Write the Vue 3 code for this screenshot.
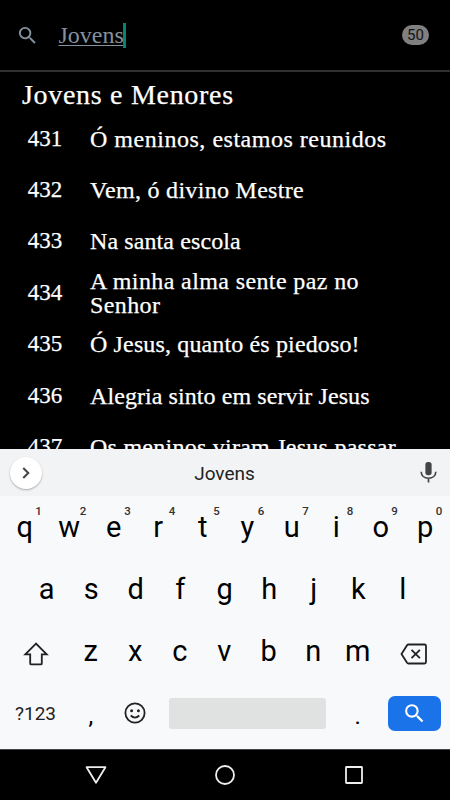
<template>
  <div class="screen">
    <header class="search-bar">
      <svg class="search-icon" viewBox="0 0 24 24">
        <path :d="searchPath" />
      </svg>
      <div class="search-input"><span class="query">Jovens</span><i class="caret"></i></div>
      <span class="count">50</span>
    </header>

    <main class="results">
      <h1 class="section-title">Jovens e Menores</h1>
      <div v-for="hymn in hymns" :key="hymn.number" class="hymn">
        <span class="hymn-number">{{ hymn.number }}</span>
        <span class="hymn-title" :style="{ letterSpacing: hymn.tracking + 'px' }">{{ hymn.title }}</span>
      </div>
    </main>

    <section class="keyboard">
      <div class="suggestions">
        <button class="expand">
          <svg viewBox="0 0 24 24"><path d="M9 6.5l5.5 5.5L9 17.5" /></svg>
        </button>
        <span class="suggestion">Jovens</span>
        <svg class="mic" viewBox="0 0 24 24">
          <rect x="9" y="2" width="6" height="12.6" rx="2.6" />
          <path d="M5 11.2c0 3.9 3 6.3 7 6.3s7-2.4 7-6.3M12 17.5v4" />
        </svg>
      </div>

      <div class="row row-top">
        <span v-for="(letter, i) in topRow" :key="letter" class="key">
          {{ letter }}<sup class="hint">{{ (i + 1) % 10 }}</sup>
        </span>
      </div>

      <div class="row row-middle">
        <span v-for="letter in middleRow" :key="letter" class="key">{{ letter }}</span>
      </div>

      <div class="row row-bottom">
        <span class="key icon-key">
          <svg class="shift" viewBox="0 0 26 26">
            <path d="M13 2.6L2.3 13.3h4.9v9.1q0 1 1 1h9.6q1 0 1-1v-9.1h4.900z" />
          </svg>
        </span>
        <span v-for="letter in bottomRow" :key="letter" class="key">{{ letter }}</span>
        <span class="key icon-key">
          <svg class="backspace" viewBox="0 0 28 22">
            <path d="M8.500 1.500h16q1.500 0 1.500 1.500v16q0 1.500-1.500 1.500h-16q-1 0-1.600-.9L1.500 11l5.400-8.600q.6-.9 1.600-.9z" />
            <path d="M11.500 6.800l8.400 8.400M19.900 6.800l-8.400 8.400" />
          </svg>
        </span>
      </div>

      <div class="row row-actions">
        <span class="key symbols">?123</span>
        <span class="key punctuation">,</span>
        <span class="key icon-key">
          <svg class="emoji" viewBox="0 0 24 24">
            <circle cx="12" cy="12" r="9.6" />
            <circle class="eye" cx="8.6" cy="9.8" r="1.5" />
            <circle class="eye" cx="15.4" cy="9.8" r="1.5" />
            <path d="M7.700 14.500q4.300 4.300 8.600 0" />
          </svg>
        </span>
        <span class="space-bar"></span>
        <span class="key punctuation">.</span>
        <button class="go">
          <svg viewBox="0 0 24 24"><path :d="searchPath" /></svg>
        </button>
      </div>
    </section>

    <nav class="nav-bar">
      <svg viewBox="0 0 24 24"><path d="M2.600 4.200h18.800L12 19.800z" /></svg>
      <svg viewBox="0 0 24 24"><circle cx="12" cy="12" r="9" /></svg>
      <svg viewBox="0 0 24 24"><rect x="4" y="4" width="16" height="16" rx="0.5" /></svg>
    </nav>
  </div>
</template>

<script setup>
const searchPath =
  'M15.500 14h-.79l-.28-.27A6.471 6.471 0 0 0 16 9.500 6.500 6.500 0 1 0 9.500 16c1.610 0 3.090-.59 4.230-1.570l.27.28v.79l5 4.990L20.490 19l-4.990-5zm-6 0C7.010 14 5 11.990 5 9.500S7.010 5 9.500 5 14 7.010 14 9.500 11.990 14 9.500 14z'

const hymns = [
  { number: 431, title: 'Ó meninos, estamos reunidos', tracking: 0.52 },
  { number: 432, title: 'Vem, ó divino Mestre', tracking: 0.3 },
  { number: 433, title: 'Na santa escola', tracking: 0.1 },
  { number: 434, title: 'A minha alma sente paz no Senhor', tracking: 0.39 },
  { number: 435, title: 'Ó Jesus, quanto és piedoso!', tracking: 0.14 },
  { number: 436, title: 'Alegria sinto em servir Jesus', tracking: 0.08 },
  { number: 437, title: 'Os meninos viram Jesus passar', tracking: 0.25 },
]

const topRow = [...'qwertyuiop']
const middleRow = [...'asdfghjkl']
const bottomRow = [...'zxcvbnm']
</script>

<style>
body {
  background: #000;
}
</style>

<style scoped>
.screen {
  display: flex;
  flex-direction: column;
  width: 450px;
  height: 800px;
  overflow: hidden;
  background: #000;
  color: #fff;
  font-family: 'Liberation Serif', serif;
}

.search-bar {
  display: flex;
  align-items: center;
  flex-shrink: 0;
  box-sizing: border-box;
  height: 72px;
  padding: 0 21px 0 16px;
  border-bottom: 2px solid #303030;
}

.search-icon {
  width: 23px;
  height: 23px;
  fill: #84919e;
}

.search-input {
  display: flex;
  align-items: center;
  flex: 1;
  height: 26px;
  padding-left: 19.5px;
  font-size: 24px;
  line-height: 25px;
  color: #84919e;
}

.query {
  text-decoration: underline;
  text-decoration-thickness: 1px;
  text-underline-offset: 2px;
  text-decoration-skip-ink: none;
}

.caret {
  width: 3px;
  height: 25px;
  margin-left: -1px;
  background: #008577;
}

.count {
  width: 27px;
  height: 20px;
  border-radius: 10px;
  background: #808080;
  color: #111;
  font: 15px/21px Roboto, sans-serif;
  text-align: center;
}

.results {
  height: 377px;
  overflow: hidden;
  -webkit-text-stroke: 0.25px #fff;
}

.section-title {
  box-sizing: border-box;
  height: 41px;
  margin: 0;
  padding: 4px 0 0 22px;
  font-size: 28px;
  font-weight: 400;
  line-height: 38px;
  letter-spacing: 0.7px;
}

.hymn {
  display: grid;
  grid-template-columns: 90px 315px;
  align-items: center;
  height: 51.4px;
  font-size: 24px;
  line-height: 24px;
}

.hymn-number {
  font-size: 23px;
  text-align: center;
}

.keyboard {
  flex-shrink: 0;
  height: 300px;
  background: #f8f9fb;
  color: #111;
  font-family: Roboto, sans-serif;
}

.suggestions {
  display: grid;
  grid-template-columns: 53px 1fr 44px;
  align-items: center;
  height: 47px;
  background: #f1f3f4;
}

.expand {
  display: flex;
  align-items: center;
  justify-content: center;
  width: 32px;
  height: 32px;
  margin-left: 10px;
  padding: 0;
  border: 0;
  border-radius: 50%;
  background: #fff;
  box-shadow: 0 1px 2px rgba(0, 0, 0, 0.3);
}

.expand svg {
  width: 22px;
  height: 22px;
  fill: none;
  stroke: #444;
  stroke-width: 2.2;
}

.suggestion {
  padding-right: 10px;
  padding-top: 2px;
  font-size: 19px;
  text-align: center;
  color: #222;
}

.mic {
  width: 25px;
  height: 25px;
  margin-left: 10px;
  fill: #444;
}

.mic path {
  fill: none;
  stroke: #444;
  stroke-width: 1.6;
}

.row {
  display: grid;
  height: 62.5px;
  padding: 0 2.5px;
}

.row-top {
  grid-template-columns: repeat(10, 44.5px);
}

.row-middle {
  grid-template-columns: repeat(9, 44.5px);
  padding: 0 24.5px;
}

.row-bottom {
  grid-template-columns: 66px repeat(7, 44.5px) 67px;
}

.row-actions {
  grid-template-columns: 66px 44.5px 44.5px 178px 44.5px 67px;
  grid-template-rows: 59px;
  align-items: center;
  height: 59px;
}

.key {
  position: relative;
  font-size: 29px;
  line-height: 61px;
  text-align: center;
  color: #000;
}

.row-top .key {
  line-height: 62px;
}

.hint {
  position: absolute;
  top: 8px;
  left: 32px;
  width: 8px;
  font-size: 11.5px;
  font-weight: 500;
  line-height: 14px;
  color: #333;
}

.icon-key {
  display: flex;
  align-items: center;
  justify-content: center;
}

.icon-key svg {
  fill: none;
  stroke: #222;
  stroke-width: 1.8;
}

.row-bottom .icon-key {
  padding-top: 3px;
}

.shift {
  width: 26px;
  height: 26px;
}

.backspace {
  width: 28px;
  height: 22px;
}

.emoji {
  width: 24px;
  height: 24px;
}

.icon-key .eye {
  fill: #222;
  stroke: none;
}

.row-actions .key {
  line-height: 50px;
}

.row-actions .symbols {
  padding-top: 1px;
  font-size: 19px;
  color: #222;
}

.row-actions .punctuation {
  padding-top: 6px;
  font-size: 24px;
}

.space-bar {
  height: 31px;
  margin: 0 10px 0 11px;
  border-radius: 3px;
  background: #e0e2e1;
}

.go {
  display: flex;
  align-items: center;
  justify-content: center;
  width: 53px;
  height: 35px;
  margin-left: 7.5px;
  padding: 0;
  border: 0;
  border-radius: 7px;
  background: #1a73e8;
}

.go svg {
  width: 25px;
  height: 25px;
  fill: #fff;
}

.nav-bar {
  display: flex;
  align-items: center;
  justify-content: space-between;
  flex: 1;
  padding: 0 84px;
  border-top: 1px solid #444;
}

.nav-bar svg {
  width: 24px;
  height: 24px;
  fill: none;
  stroke: #eee;
  stroke-width: 1.8;
  stroke-linejoin: round;
}
</style>
